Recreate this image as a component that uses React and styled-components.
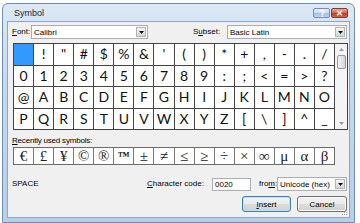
import React from "react";
import styled, { createGlobalStyle } from "styled-components";

const GlobalStyle = createGlobalStyle`
  html, body { margin: 0; padding: 0; background: #ffffff; }
  body {
    width: 360px; height: 223px; overflow: hidden;
    font-family: "Liberation Sans", Arial, sans-serif;
  }
  * { box-sizing: border-box; }
`;

const Window = styled.div`
  margin: 3px 0 0 2px;
  width: 353px;
  height: 220px;
  display: flex;
  flex-direction: column;
  border: 1px solid #6f8db3;
  border-radius: 6px 6px 0 0;
  background: linear-gradient(180deg, #dce8f5 0%, #c6d9ee 35%, #b9cfe8 100%);
  padding: 0 4px 4px;
`;

const TitleBar = styled.div`
  height: 17px;
  display: flex;
  align-items: center;
  padding-left: 7px;
`;

const Title = styled.span`
  font-size: 9px;
  color: #1b2533;
  flex: 1;
`;

const CaptionButtons = styled.div`
  display: flex;
  align-self: flex-start;
  margin-top: 4px;
  margin-right: 2px;
  gap: 1px;
`;

const CaptionButton = styled.div`
  width: ${(p) => p.$w}px;
  height: 10px;
  border-radius: 2px;
  border: 1px solid ${(p) => (p.$close ? "#8a3a2c" : "#7590b4")};
  background: ${(p) =>
    p.$close
      ? "linear-gradient(180deg, #eaa896 0%, #d86a55 45%, #c23c27 55%, #d2634c 100%)"
      : "linear-gradient(180deg, #e6eff9 0%, #c9dbef 45%, #a9c3e2 55%, #bcd2ec 100%)"};
  display: flex;
  align-items: center;
  justify-content: center;
`;

const Body = styled.div`
  flex: 1;
  position: relative;
  background: #f0f0f0;
  border: 1px solid #8ea6c3;
  padding: 3px 2px 0 4px;
  display: flex;
  flex-direction: column;
`;

const Row = styled.div`
  display: flex;
  align-items: center;
  height: 14px;
  margin-top: ${(p) => p.$mt || 0}px;
`;

const Label = styled.span`
  display: inline-block;
  width: ${(p) => p.$w}px;
  margin-left: ${(p) => p.$ml || 0}px;
  font-size: 8px;
  color: #000;
  white-space: nowrap;
  line-height: 10px;
`;

const U = styled.span`
  text-decoration: underline;
`;

const ComboBox = styled.div`
  width: ${(p) => p.$w}px;
  height: 14px;
  border: 1px solid #a9aeb6;
  background: #ffffff;
  display: flex;
  align-items: center;
  padding-left: 2px;
  font-size: 8px;
  color: #000;
`;

const ComboText = styled.span`
  flex: 1;
  white-space: nowrap;
`;

const DropButton = styled.div`
  width: 10px;
  height: 10px;
  margin-right: 1px;
  border: 1px solid #b4b4b4;
  background: linear-gradient(180deg, #f6f6f6 0%, #e6e6e6 50%, #d6d6d6 100%);
  display: flex;
  align-items: center;
  justify-content: center;
`;

const TextInput = styled.div`
  width: ${(p) => p.$w}px;
  height: 13px;
  border: 1px solid #a9aeb6;
  background: #ffffff;
  font-size: 8px;
  padding-left: 2px;
  display: flex;
  align-items: center;
`;

const CharMap = styled.div`
  margin: 4px 0 0 1px;
  width: 335px;
  height: 87px;
  border: 1px solid #444444;
  display: flex;
  background: #ffffff;
`;

const CharGrid = styled.div`
  flex: 1;
  display: grid;
  grid-template-columns: repeat(16, 1fr);
  grid-template-rows: repeat(4, 1fr);
  gap: 1px;
  background: #444444;
`;

const CharCell = styled.div`
  background: ${(p) => (p.$selected ? "#3399ff" : "#ffffff")};
  display: flex;
  align-items: center;
  justify-content: center;
  font-family: Lato, "Open Sans", sans-serif;
  font-size: 14px;
  color: #111111;
  line-height: 1;
`;

const ScrollBar = styled.div`
  width: 13px;
  border-left: 1px solid #444444;
  background: #f4f4f4;
  display: flex;
  flex-direction: column;
  align-items: center;
  padding: 1px 0;
`;

const ScrollArrow = styled.div`
  width: 10px;
  height: 9px;
  display: flex;
  align-items: center;
  justify-content: center;
`;

const ScrollThumb = styled.div`
  width: 9px;
  height: 14px;
  margin-top: 1px;
  border: 1px solid #9a9a9a;
  border-radius: 2px;
  background: linear-gradient(90deg, #f4f4f4 0%, #e4e4e4 50%, #d4d4d4 100%);
`;

const ScrollTrack = styled.div`
  flex: 1;
`;

const RecentLabel = styled.div`
  margin-top: 6px;
  font-size: 8px;
  line-height: 10px;
  color: #000;
  letter-spacing: -0.2px;
`;

const RecentRow = styled.div`
  margin: 1px 0 0 1px;
  width: 322px;
  height: 18px;
  border: 1px solid #6a6a6a;
  display: grid;
  grid-template-columns: repeat(16, 1fr);
  gap: 1px;
  background: #7a7a7a;
`;

const RecentCell = styled.div`
  background: #ffffff;
  display: flex;
  align-items: center;
  justify-content: center;
  font-family: "Liberation Serif", "DejaVu Serif", serif;
  font-size: ${(p) => p.$fs || 14}px;
  font-weight: ${(p) => (p.$bold ? 700 : 400)};
  color: #222222;
  line-height: 1;
`;

const ButtonRow = styled.div`
  margin-top: 5px;
  display: flex;
  justify-content: flex-end;
  gap: 6px;
`;

const PushButton = styled.div`
  width: ${(p) => p.$w}px;
  height: 16px;
  border: 1px solid ${(p) => (p.$default ? "#3c7fb1" : "#707070")};
  border-radius: 3px;
  background: linear-gradient(180deg, #f2f2f2 0%, #ebebeb 48%, #dddddd 52%, #cfcfcf 100%);
  box-shadow: ${(p) => (p.$default ? "inset 0 0 0 1px #bfe0f5" : "inset 0 0 0 1px #fcfcfc")};
  font-size: 8px;
  color: #000;
  display: flex;
  align-items: center;
  justify-content: center;
`;

const Grip = styled.svg`
  position: absolute;
  right: 1px;
  bottom: 1px;
`;

const ROWS = [
  [" ", "!", '"', "#", "$", "%", "&", "'", "(", ")", "*", "+", ",", "-", ".", "/"],
  ["0", "1", "2", "3", "4", "5", "6", "7", "8", "9", ":", ";", "<", "=", ">", "?"],
  ["@", "A", "B", "C", "D", "E", "F", "G", "H", "I", "J", "K", "L", "M", "N", "O"],
  ["P", "Q", "R", "S", "T", "U", "V", "W", "X", "Y", "Z", "[", "\\", "]", "^", "_"],
];

const RECENT = ["€", "£", "¥", "©", "®", "™", "±", "≠", "≤", "≥", "÷", "×", "∞", "μ", "α", "β"];

const DownTriangle = () => (
  <svg width="5" height="3" viewBox="0 0 5 3">
    <path d="M0 0 L5 0 L2.5 3 Z" fill="#111" />
  </svg>
);

export default function App() {
  return (
    <>
      <GlobalStyle />
      <Window>
        <TitleBar>
          <Title>Symbol</Title>
          <CaptionButtons>
            <CaptionButton $w={17}>
              <svg width="6" height="7" viewBox="0 0 6 7">
                <path d="M1 2 Q1 0.5 3 0.5 Q5 0.5 5 2 Q5 3 3.3 3.7 L3.3 4.8" fill="none" stroke="#ffffff" strokeWidth="1.3" />
                <rect x="2.6" y="5.6" width="1.4" height="1.2" fill="#ffffff" />
              </svg>
            </CaptionButton>
            <CaptionButton $w={17} $close>
              <svg width="7" height="6" viewBox="0 0 7 6">
                <path d="M1 0.8 L6 5.2 M6 0.8 L1 5.2" stroke="#ffffff" strokeWidth="1.5" />
              </svg>
            </CaptionButton>
          </CaptionButtons>
        </TitleBar>
        <Body>
          <Row>
            <Label $w={19}>
              <U>F</U>ont:
            </Label>
            <ComboBox $w={117}>
              <ComboText>Calibri</ComboText>
              <DropButton>
                <DownTriangle />
              </DropButton>
            </ComboBox>
            <Label $w={34} $ml={45}>
              S<U>u</U>bset:
            </Label>
            <ComboBox $w={120}>
              <ComboText>Basic Latin</ComboText>
              <DropButton>
                <DownTriangle />
              </DropButton>
            </ComboBox>
          </Row>

          <CharMap>
            <CharGrid>
              {ROWS.flat().map((c, i) => (
                <CharCell key={i} $selected={i === 0}>
                  {c}
                </CharCell>
              ))}
            </CharGrid>
            <ScrollBar>
              <ScrollArrow>
                <svg width="5" height="3" viewBox="0 0 5 3">
                  <path d="M0 3 L5 3 L2.5 0 Z" fill="#9a9a9a" />
                </svg>
              </ScrollArrow>
              <ScrollThumb />
              <ScrollTrack />
              <ScrollArrow>
                <svg width="5" height="3" viewBox="0 0 5 3">
                  <path d="M0 0 L5 0 L2.5 3 Z" fill="#9a9a9a" />
                </svg>
              </ScrollArrow>
            </ScrollBar>
          </CharMap>

          <RecentLabel>
            <U>R</U>ecently used symbols:
          </RecentLabel>
          <RecentRow>
            {RECENT.map((c, i) => (
              <RecentCell key={i} $fs={c === "™" ? 12 : 15} $bold={c === "™"}>
                {c}
              </RecentCell>
            ))}
          </RecentRow>

          <Row $mt={12}>
            <Label $w={135}>SPACE</Label>
            <Label $w={65}>
              <U>C</U>haracter code:
            </Label>
            <TextInput $w={39}>0020</TextInput>
            <Label $w={18} $ml={8}>
              fro<U>m</U>:
            </Label>
            <ComboBox $w={70}>
              <ComboText>Unicode (hex)</ComboText>
              <DropButton>
                <DownTriangle />
              </DropButton>
            </ComboBox>
          </Row>

          <ButtonRow>
            <PushButton $w={49} $default>
              <span>
                <U>I</U>nsert
              </span>
            </PushButton>
            <PushButton $w={50}>Cancel</PushButton>
          </ButtonRow>

          <Grip width="6" height="6" viewBox="0 0 6 6">
            <rect x="4" y="0" width="1" height="1" fill="#a0a0a0" />
            <rect x="2" y="2" width="1" height="1" fill="#a0a0a0" />
            <rect x="4" y="2" width="1" height="1" fill="#a0a0a0" />
            <rect x="0" y="4" width="1" height="1" fill="#a0a0a0" />
            <rect x="2" y="4" width="1" height="1" fill="#a0a0a0" />
            <rect x="4" y="4" width="1" height="1" fill="#a0a0a0" />
          </Grip>
        </Body>
      </Window>
    </>
  );
}
